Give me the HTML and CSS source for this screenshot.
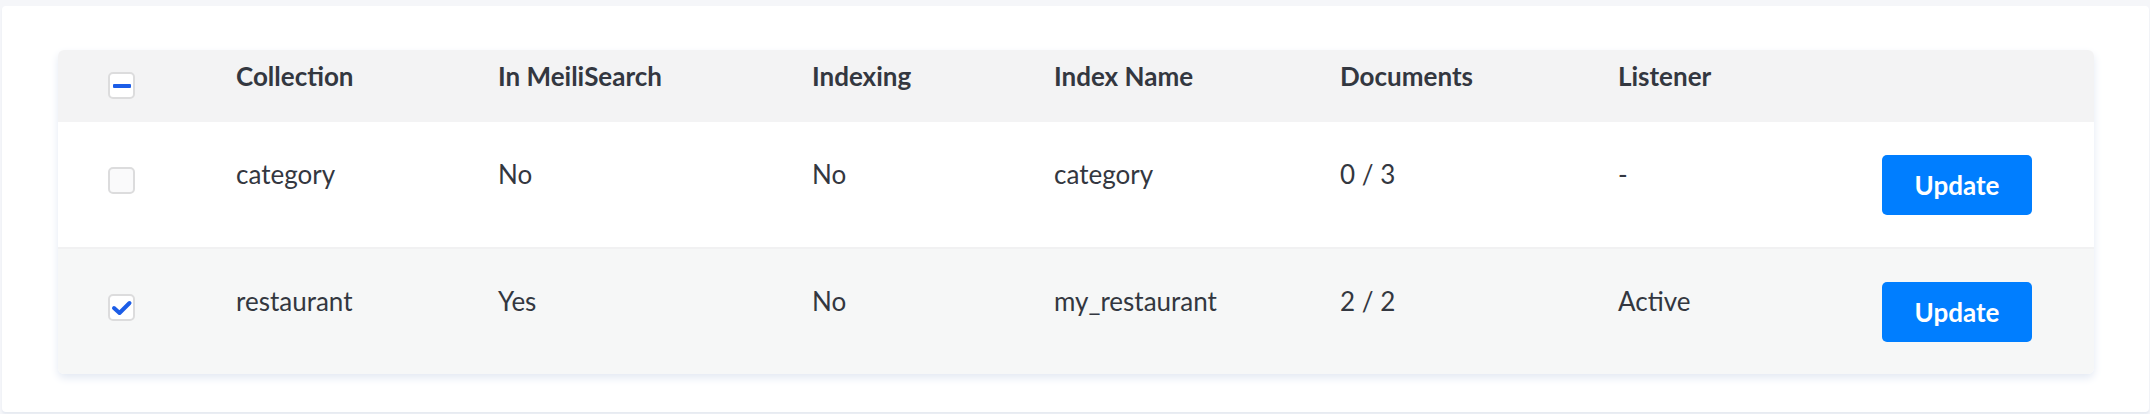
FILE: index.html
```html
<!DOCTYPE html>
<html lang="en">
<head>
<meta charset="utf-8">
<title>MeiliSearch collections</title>
<link rel="stylesheet" href="styles.css">
</head>
<body>
<div class="card">
  <div class="table">
    <div class="row head">
      <div class="cell check"><span class="box"><svg viewBox="0 0 27 27" width="27" height="27"><rect x="5" y="12" width="18" height="4" rx="1" fill="#1c5de7"/></svg></span></div>
      <div class="cell txt">Collection</div>
      <div class="cell txt">In MeiliSearch</div>
      <div class="cell txt">Indexing</div>
      <div class="cell txt">Index Name</div>
      <div class="cell txt">Documents</div>
      <div class="cell txt">Listener</div>
      <div class="cell act"></div>
    </div>
    <div class="row body first">
      <div class="cell check"><span class="box empty"></span></div>
      <div class="cell txt">category</div>
      <div class="cell txt">No</div>
      <div class="cell txt">No</div>
      <div class="cell txt">category</div>
      <div class="cell txt">0 / 3</div>
      <div class="cell txt">-</div>
      <div class="cell act"><button class="btn">Update</button></div>
    </div>
    <div class="row body alt">
      <div class="cell check"><span class="box"><svg viewBox="0 0 27 27" width="27" height="27"><polyline points="6,14 11.5,19 21.5,9" fill="none" stroke="#1c5de7" stroke-width="4" stroke-linecap="round" stroke-linejoin="round"/></svg></span></div>
      <div class="cell txt">restaurant</div>
      <div class="cell txt">Yes</div>
      <div class="cell txt">No</div>
      <div class="cell txt">my_restaurant</div>
      <div class="cell txt">2 / 2</div>
      <div class="cell txt">Active</div>
      <div class="cell act"><button class="btn">Update</button></div>
    </div>
  </div>
</div>
</body>
</html>
```

FILE: styles.css
```css
html, body {
  margin: 0;
  padding: 0;
}
body {
  background: #f5f6f9;
  padding: 6px 1px 2px 2px;
  height: 414px;
  box-sizing: border-box;
  font-family: Lato, "Open Sans", "Liberation Sans", sans-serif;
  color: #333740;
}
.card {
  background: #ffffff;
  border-radius: 4px;
  box-shadow: 0 2px 2px #e6eaf1;
  padding: 44px 55px 38px 56px;
  height: 406px;
  box-sizing: border-box;
}
.table {
  border-radius: 6px;
  overflow: hidden;
  box-shadow: 0 4px 8px #e3e9f3;
  background: #ffffff;
}
.row {
  display: grid;
  grid-template-columns: 178px 262px 314px 242px 286px 278px 1fr 212px;
  align-items: start;
}
.head {
  background: #f3f3f4;
  height: 72px;
}
.body {
  height: 125px;
}
.first {
  border-bottom: 2px solid #f1f1f2;
}
.alt {
  background: #f6f7f7;
}
.cell {
  font-size: 26px;
  line-height: 32px;
}
.head .txt {
  font-weight: 700;
  padding-top: 10px;
}
.body .txt {
  padding-top: 36px;
}
.check {
  padding-left: 50px;
}
.head .check {
  padding-top: 22px;
}
.body .check {
  padding-top: 45px;
}
.box {
  display: block;
  width: 27px;
  height: 27px;
  box-sizing: border-box;
  border: 2px solid #dcdcdd;
  border-radius: 5px;
  background: #ffffff;
  position: relative;
}
.box svg {
  position: absolute;
  left: -2px;
  top: -2px;
}
.box.empty {
  background: #fafafb;
}
.act {
  display: flex;
  justify-content: flex-end;
  padding-right: 62px;
}
.body .act {
  padding-top: 33px;
}
.btn {
  width: 150px;
  height: 60px;
  border: none;
  border-radius: 5px;
  background: #007eff;
  color: #ffffff;
  font-family: Lato, "Open Sans", "Liberation Sans", sans-serif;
  font-size: 26px;
  font-weight: 700;
  line-height: 60px;
  padding: 0;
  box-sizing: border-box;
}
```
